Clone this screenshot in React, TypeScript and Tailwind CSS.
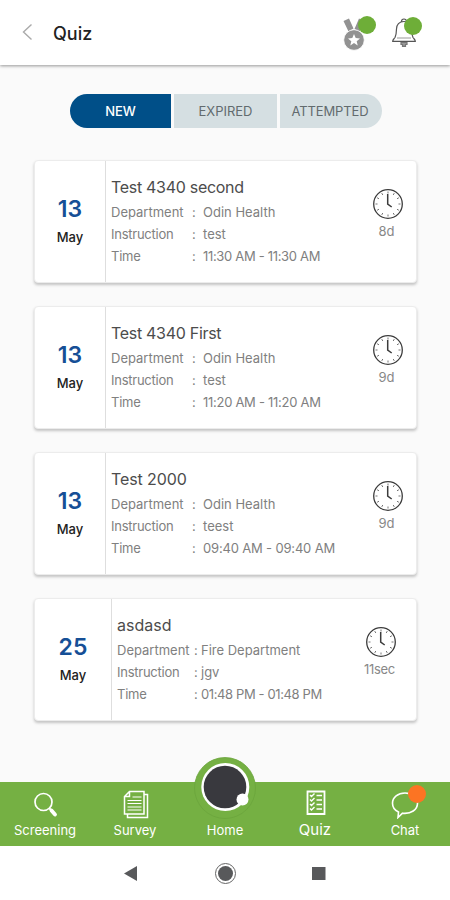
import React from "react";
import { clsx } from "clsx";

interface QuizItem {
  day: string;
  month: string;
  title: string;
  titleClass?: string;
  department: string;
  instruction: string;
  time: string;
  timeClass: string;
  left: string;
  compact?: boolean;
}

const quizzes: QuizItem[] = [
  { day: "13", month: "May", title: "Test 4340 second", titleClass: "tracking-[-0.3px]", department: "Odin Health", instruction: "test", time: "11:30 AM - 11:30 AM", timeClass: "tracking-[-0.32px]", left: "8d" },
  { day: "13", month: "May", title: "Test 4340 First", titleClass: "tracking-[-0.3px]", department: "Odin Health", instruction: "test", time: "11:20 AM - 11:20 AM", timeClass: "tracking-[-0.28px]", left: "9d" },
  { day: "13", month: "May", title: "Test 2000", titleClass: "tracking-[-0.1px]", department: "Odin Health", instruction: "teest", time: "09:40 AM - 09:40 AM", timeClass: "tracking-[-0.17px]", left: "9d" },
  { day: "25", month: "May", title: "asdasd", department: "Fire Department", instruction: "jgv", time: "01:48 PM - 01:48 PM", timeClass: "tracking-[-0.38px]", left: "11sec", compact: true },
];

function MedalIcon() {
  return (
    <svg width="24" height="34" viewBox="0 0 24 34" fill="#929292">
      <path d="M1.500 4l5.500-2.500 4.500 10-5 3zM22 4l-5-2.500-4.500 10.500 5 2.500z" />
      <circle cx="12" cy="23" r="10.300" stroke="#fff" strokeWidth="0.800" />
      <path fill="#fff" d="M12 17l1.700 4 4.300.4-3.300 2.800 1 4.200-3.700-2.300-3.700 2.300 1-4.200L6 21.400l4.300-.4z" />
    </svg>
  );
}

function BellIcon() {
  return (
    <svg width="26" height="32" viewBox="0 0 26 32" fill="none" stroke="#555" strokeWidth="1.200">
      <path d="M10.500 4.500a2.500 2.500 0 0 1 5 0M13 4.500c-4.800 0-7.500 3-7.500 7.500-.1 4-.5 6.500-1.500 8.500-1 1.500-2.300 2-2.300 3.800h22.600c0-1.800-1.300-2.300-2.300-3.800-1-2-1.400-4.500-1.500-8.500 0-4.500-2.700-7.500-7.500-7.500z" />
      <path stroke="#aaa" d="M6 21h14" />
      <path stroke="#777" fill="#999" d="M10 25.500h6v2h-1.500v1.800h-3v-1.800H10z" />
    </svg>
  );
}

function ClockIcon() {
  const ticks = [0, 30, 60, 90, 120, 150, 180, 210, 240, 270, 300, 330];
  return (
    <svg width="32" height="32" viewBox="0 0 32 32" fill="none" stroke="#3c3c3c">
      <circle cx="16" cy="16" r="14.300" strokeWidth="1.300" />
      {ticks.map((deg) => (
        <path key={deg} d="M16 3.500v2" strokeWidth="0.700" transform={`rotate(${deg} 16 16)`} />
      ))}
      <path d="M15.700 6v10l4 3" strokeWidth="1.500" />
    </svg>
  );
}

function SearchIcon() {
  return (
    <svg className="ml-0.5" width="26" height="28" viewBox="0 0 26 28" fill="none" stroke="#fff">
      <circle cx="10.500" cy="11" r="8.500" strokeWidth="1.700" />
      <path d="M16 17l2 2" strokeWidth="2" />
      <path d="M18.500 19.500l3.500 4" strokeWidth="3.800" strokeLinecap="round" />
    </svg>
  );
}

function SurveyIcon() {
  return (
    <svg className="ml-px" width="26" height="30" viewBox="0 0 26 30" fill="none" stroke="#fff" strokeWidth="1.500">
      <path d="M6.500 1.500h14.500v22.500h-19.500V6.500zM6.500 1.500v5h-5M21 4.500h3.500v23h-20V24" />
      <path d="M9.500 7h9M4.500 10.500h14M4.500 13.500h14M4.500 17h14M4.500 20h14" strokeWidth="1.200" />
    </svg>
  );
}

function ChecklistIcon() {
  return (
    <svg className="-mt-1 ml-px" width="20" height="26" viewBox="0 0 20 26" fill="none" stroke="#fff">
      <path d="M1.500 1.500h17v22.500h-17z" strokeWidth="1.800" />
      {[5, 9.5, 14, 18.5].map((y) => (
        <path key={y} d={`M4 ${y}l1.500 1.500 3-3M10.500 ${y + 0.5}h5.500`} strokeWidth="1.400" />
      ))}
    </svg>
  );
}

function ChatIcon() {
  return (
    <svg width="28" height="28" viewBox="0 0 28 28" fill="none" stroke="#fff" strokeWidth="1.600">
      <path d="M14 2C7 2 1.500 6.300 1.500 12.200c0 3.800 2.200 7 6 8.800l-.5 5.500 4.500-4.300c8.500 1 15-3.500 15-10C26.500 6.300 21 2 14 2z" />
    </svg>
  );
}

interface FieldProps {
  label: string;
  value: string;
  compact?: boolean;
  labelClass?: string;
  valueClass?: string;
}

function Field({ label, value, compact, labelClass, valueClass }: FieldProps) {
  return (
    <div className="flex h-[22px] items-center whitespace-nowrap text-[13px] text-[#808080]">
      <span className={clsx(compact ? "w-[77px]" : "w-[81px]", labelClass)}>{label}</span>
      <span className={compact ? "w-[7px]" : "w-[11px]"}>:</span>
      <span className={valueClass}>{value}</span>
    </div>
  );
}

function QuizCard({ quiz }: { quiz: QuizItem }) {
  return (
    <div className="flex h-[123px] rounded-[4px] border border-[#ececec] bg-white shadow-[0_2px_3px_rgba(0,0,0,0.22)]">
      <div
        className={clsx(
          "flex shrink-0 flex-col items-center border-r border-[#dedede] pt-[33px]",
          quiz.compact ? "w-[77px]" : "w-[71px]"
        )}
      >
        <span className="text-[23px] font-semibold leading-[30px] text-[#164f96]">{quiz.day}</span>
        <span className="mt-[3px] text-[13px] font-medium leading-5 text-[#222]">{quiz.month}</span>
      </div>
      <div className="flex-1 pl-[5px] pt-[15px]">
        <h2 className={clsx("h-[26px] text-[16px] leading-[22px] text-[#4c4c4c]", quiz.titleClass)}>{quiz.title}</h2>
        <Field label="Department" value={quiz.department} compact={quiz.compact} />
        <Field label="Instruction" value={quiz.instruction} compact={quiz.compact} labelClass="tracking-[-0.25px]" />
        <Field label="Time" value={quiz.time} compact={quiz.compact} labelClass="tracking-[-0.25px]" valueClass={quiz.timeClass} />
      </div>
      <div className={clsx("flex w-[56px] shrink-0 flex-col items-center pt-[27px]", quiz.compact && "mr-[7px]")}>
        <ClockIcon />
        <span className={clsx("mt-px text-[13px] leading-5 text-[#888]", quiz.compact ? "-ml-[3px] tracking-[-0.3px]" : "-ml-[3px]")}>
          {quiz.left}
        </span>
      </div>
    </div>
  );
}

function NavItem({ label, active, children }: { label: string; active?: boolean; children?: React.ReactNode }) {
  return (
    <div className="flex w-[90px] flex-col items-center pt-2">
      <div className="relative flex h-[30px] items-center">{children}</div>
      <span className={clsx("leading-5 text-white", active ? "text-[15px]" : "text-[13px]")}>{label}</span>
    </div>
  );
}

export default function App() {
  return (
    <div className="flex h-[900px] w-[450px] flex-col overflow-hidden bg-[#fafafa] font-['Inter',sans-serif]">
      <header className="relative flex h-[65px] shrink-0 items-center bg-white shadow-[0_1px_3px_rgba(0,0,0,0.4)]">
        <svg className="-mt-0.5 ml-[22px]" width="11" height="18" viewBox="0 0 11 18" fill="none" stroke="#aaa" strokeWidth="1.400">
          <path d="M9.500 1.500L1.500 9l8 7.500" />
        </svg>
        <h1 className="ml-5 mt-0.5 text-[18px] font-medium leading-6 text-[#222]">Quiz</h1>
        <div className="relative ml-auto mr-[25px] mt-0.5">
          <MedalIcon />
          <span className="absolute -right-[10px] -top-px size-[18px] rounded-full bg-[#6eae38]" />
        </div>
        <div className="relative mr-[33px]">
          <BellIcon />
          <span className="absolute -right-[5px] top-0 size-[18px] rounded-full bg-[#6eae38]" />
        </div>
      </header>

      <div className="ml-[70px] mt-[29px] flex h-[34px] shrink-0 gap-[3px] text-[13px]">
        <button className="w-[101px] rounded-l-full bg-[#004f88] pt-0.5 font-medium text-white">NEW</button>
        <button className="w-[103px] bg-[#d5dfe2] pt-0.5 text-[#626b6e]">EXPIRED</button>
        <button className="w-[102px] rounded-r-full bg-[#d5dfe2] pr-0.5 pt-0.5 tracking-[-0.1px] text-[#626b6e]">ATTEMPTED</button>
      </div>

      <main className="ml-[34px] mt-8 flex w-[383px] flex-1 flex-col gap-[23px]">
        {quizzes.map((quiz) => (
          <QuizCard key={quiz.title} quiz={quiz} />
        ))}
      </main>

      <nav className="relative flex h-[64px] shrink-0 bg-[#75b043]">
        <NavItem label="Screening"><SearchIcon /></NavItem>
        <NavItem label="Survey"><SurveyIcon /></NavItem>
        <NavItem label="Home">
          <svg className="absolute -left-[31px] -top-[34px]" width="62" height="64" viewBox="0 0 62 64">
            <circle cx="31" cy="32" r="30.500" fill="#75b043" stroke="#6ba43c" strokeWidth="0.800" />
            <circle cx="31.300" cy="31" r="24" fill="#fff" />
            <circle cx="31" cy="31" r="21.300" fill="#39393e" />
            <circle cx="48.500" cy="43.500" r="6" fill="#fff" />
          </svg>
        </NavItem>
        <NavItem label="Quiz" active><ChecklistIcon /></NavItem>
        <NavItem label="Chat">
          <ChatIcon />
          <span className="absolute -right-[7px] -top-[5px] size-[18px] rounded-full bg-[#fc7423]" />
        </NavItem>
      </nav>

      <footer className="flex h-[54px] shrink-0 justify-center bg-white">
        <svg width="210" height="54" viewBox="0 0 210 54" fill="#58595b">
          <path d="M4 27.500L17 20v15z" />
          <circle cx="105.500" cy="27.500" r="10" fill="none" stroke="#666" />
          <circle cx="105.500" cy="27.500" r="7.500" />
          <path d="M192 21h13.500v13H192z" />
        </svg>
      </footer>
    </div>
  );
}
